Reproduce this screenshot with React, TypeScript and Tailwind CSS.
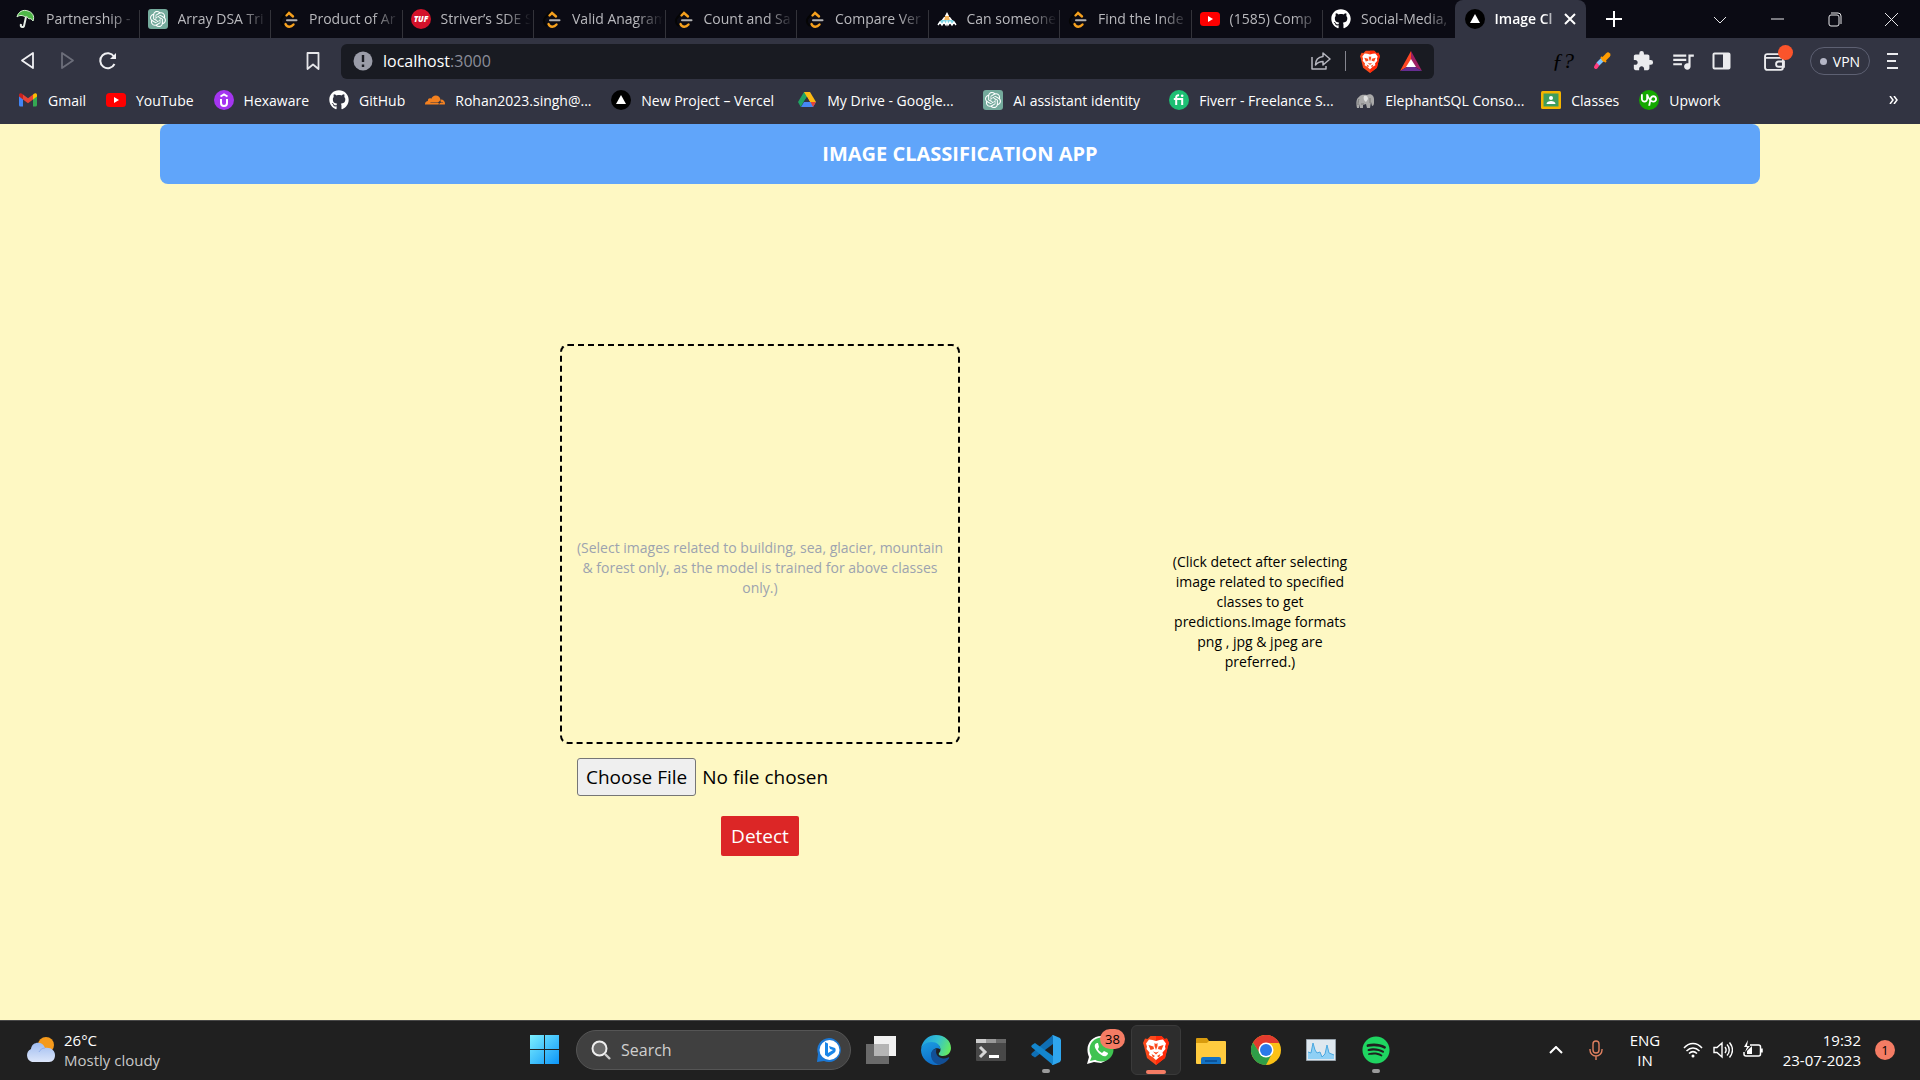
import React from "react";
import { FaGithub, FaSpotify } from "react-icons/fa";
import { SiOpenai, SiCloudflare, SiUpwork } from "react-icons/si";
import { MdExtension, MdQueueMusic } from "react-icons/md";

type Svg = { className?: string };

const Umbrella = () => (
  <svg viewBox="0 0 20 20" className="size-5 shrink-0">
    <path d="M1 8C2 3 7 0 12 2c4 1 7 5 5 10-1-2-3-3-4-2-1-2-3-3-4-2C7 6 3 6 1 8z" fill="#4fb748" stroke="#d9f2d4" />
    <path d="M10 8 8 17c-1 2-4 1-3-2" fill="none" stroke="#e6ede6" strokeWidth="2" />
  </svg>
);
const OpenAi = () => (
  <span className="flex size-5 shrink-0 items-center justify-center rounded-[3px] bg-[#74aa9c] text-white">
    <SiOpenai className="size-4" />
  </span>
);
const LeetCode = () => (
  <svg viewBox="0 0 20 20" className="size-5 shrink-0">
    <path d="M9 2 3 9c-1.500 2-1.500 4 0 6l2 2" fill="none" stroke="#050505" strokeWidth="2" />
    <path d="M7.500 6.500 10 4l4 3.500" fill="none" stroke="#f5a01d" strokeWidth="2.4" strokeLinecap="round" />
    <path d="M6.500 15c1.500 3.500 5.500 3.500 8 .5" fill="none" stroke="#f5a01d" strokeWidth="2.400" strokeLinecap="round" />
    <path d="M8 11.200h9.500" stroke="#b3b3b3" strokeWidth="2" strokeLinecap="round" />
  </svg>
);
const Tuf = () => (
  <svg viewBox="0 0 20 20" className="size-5 shrink-0">
    <circle cx="10" cy="10" r="10" fill="#d3122a" />
    <text x="10" y="13" textAnchor="middle" fontSize="8" fontWeight="800" fontStyle="italic" fontFamily="Open Sans, sans-serif" fill="#fff">TUF</text>
  </svg>
);
const Pyramid = () => (
  <svg viewBox="0 0 20 20" className="size-5 shrink-0">
    <path d="M10 4 15 12H5z" fill="#f6b65c" />
    <path d="M10 3 8 7h4zM7 8l-3 4h3l1-4zM13 8l3 4h-3l-1-4z" fill="#fff" />
    <path d="M1 15h18l-3-4H4z" fill="#7fd6e6" />
    <path d="M1 16l2-3 2 3 2-3 2 3 1-3 1 3 2-3 2 3 2-3 2 3" fill="none" stroke="#fff" strokeWidth="1.4" />
  </svg>
);
const YouTube = () => (
  <svg viewBox="0 0 20 20" className="size-5 shrink-0">
    <rect y="3" width="20" height="14" rx="3.5" fill="#f00" />
    <path d="m8 7 5 3-5 3z" fill="#fff" />
  </svg>
);
const GitHub = () => <FaGithub className="size-5 shrink-0 text-white" />;
const Vercel = () => (
  <svg viewBox="0 0 20 20" className="size-5 shrink-0">
    <circle cx="10" cy="10" r="10" fill="#000" />
    <path d="m10 5 5 9H5z" fill="#fff" />
  </svg>
);
const Gmail = () => (
  <svg viewBox="0 0 20 20" className="size-5 shrink-0">
    <path d="M1 5v10a1.500 1.500 0 0 0 1.500 1.500H5V8z" fill="#4285f4" />
    <path d="M19 5v10a1.500 1.500 0 0 1-1.500 1.500H15V8z" fill="#34a853" />
    <path d="M15 4.500V9.500l4-3V5c0-2-2-2.500-3.500-1z" fill="#fbbc04" />
    <path d="M5 4.500V9.500l-4-3V5c0-2 2-2.500 3.500-1z" fill="#c5221f" />
    <path d="M5 4.500l5 3.800 5-3.800v5l-5 3.800-5-3.800z" fill="#ea4335" />
  </svg>
);
const Hexaware = () => (
  <svg viewBox="0 0 20 20" className="size-5 shrink-0">
    <circle cx="10" cy="10" r="10" fill="#a435f0" />
    <path d="M7 9v4a3 3 0 0 0 6 0V9M6.500 6.500 10 4.500l3.500 2" fill="none" stroke="#fff" strokeWidth="2" />
  </svg>
);
const Cloudflare = () => <SiCloudflare className="size-5 shrink-0 text-[#f48120]" />;
const Drive = () => (
  <svg viewBox="0 0 20 20" className="size-5 shrink-0">
    <path d="M7 2h6l-6.500 10L3.800 17 1 12z" fill="#1fa463" />
    <path d="M7 2h6l6 10h-6z" fill="#fdb912" />
    <path d="M4 17l3-5h12l-3 5z" fill="#4688f4" />
    <path d="M10 7.200 12.800 12H7.200z" fill="#323442" />
    <path d="M16 17l-2.500-5H19z" fill="#e5443a" />
  </svg>
);
const Fiverr = () => (
  <svg viewBox="0 0 20 20" className="size-5 shrink-0">
    <circle cx="10" cy="10" r="10" fill="#1dbf73" />
    <path d="M7.200 15V7.500C7.200 6 8 5.200 10 5.300M4.800 9h8.400V15" fill="none" stroke="#fff" strokeWidth="2" />
    <circle cx="13.200" cy="5.800" r="1.300" fill="#fff" />
  </svg>
);
const Elephant = () => (
  <svg viewBox="0 0 20 20" className="size-5 shrink-0">
    <path d="M2 18c-1-5-1-9 2-11 2-3 6-2 8-2 3-2 7 0 7 4v4c0 2-1 3-2 3l-1-4-1 6h-3l-1-4-3 1v3H5v-4l-1 4z" fill="#a9a9a9" />
    <path d="M9 6c2-1 4 0 4 3l-2 3c-2-1-3-4-2-6z" fill="#e0e0e0" />
    <path d="M4 9c-1 2-1 4-1 6M15 8v5M6 14h3" stroke="#777" fill="none" />
  </svg>
);
const Classes = () => (
  <svg viewBox="0 0 20 20" className="size-5 shrink-0">
    <rect y="1" width="20" height="18" rx="1.500" fill="#f4b400" />
    <rect x="2.500" y="3.500" width="15" height="13" fill="#3f9d5e" />
    <circle cx="10" cy="8" r="2" fill="#fff" />
    <path d="M5.500 14c0-4 9-4 9 0z" fill="#fff" />
  </svg>
);
const Upwork = () => (
  <span className="flex size-5 shrink-0 items-center justify-center rounded-full bg-[#14a800] text-white">
    <SiUpwork className="size-4" />
  </span>
);

const BraveLogo = ({ className }: Svg) => (
  <svg viewBox="0 0 26 30" className={className}>
    <path d="M7.500 1h11l3 3 2.500-.5L26 8l-1 3-3 12-9 7-9-7L1 11 0 8l2-4.500 2.500.5z" fill="#fb4a1c" />
    <path d="M13 1h5.500l3 3 2.500-.5L26 8l-1 3-3 12-9 7z" fill="#ff2a0a" />
    <path d="m9.500 5 3.500 1 3.500-1 3.500-.5 3 4-1 3 .5 2.500-3 3.500.5 2.500-3.500 2-3.500 3-3.500-3-3.500-2 .5-2.500-3-3.500.5-2.500-1-3 3-4z" fill="#fff" />
    <path d="m5.500 10 5 1.500.5 2.500-3.500 1zM20.500 10l-5 1.500-.5 2.500 3.500 1zM11.500 8l1.500 1 1.500-1v3L13 15l-1.500-4zM10 16.500l3 1 3-1-3 3zM8.500 19l3.500 2-2 1.500zM17.500 19 14 21l2 1.500z" fill="#fb4a1c" />
  </svg>
);

const tabs = [
  { icon: Umbrella, title: "Partnership -" },
  { icon: OpenAi, title: "Array DSA Tri" },
  { icon: LeetCode, title: "Product of Ar" },
  { icon: Tuf, title: "Striver’s SDE S" },
  { icon: LeetCode, title: "Valid Anagram" },
  { icon: LeetCode, title: "Count and Sa" },
  { icon: LeetCode, title: "Compare Ver" },
  { icon: Pyramid, title: "Can someone" },
  { icon: LeetCode, title: "Find the Inde" },
  { icon: YouTube, title: "(1585) Comp" },
  { icon: GitHub, title: "Social-Media," },
];

const bookmarks = [
  { icon: Gmail, label: "Gmail" },
  { icon: YouTube, label: "YouTube" },
  { icon: Hexaware, label: "Hexaware" },
  { icon: GitHub, label: "GitHub" },
  { icon: Cloudflare, label: "Rohan2023.singh@...", long: true },
  { icon: Vercel, label: "New Project – Vercel", long: true },
  { icon: Drive, label: "My Drive - Google...", long: true },
  { icon: OpenAi, label: "AI assistant identity", long: true },
  { icon: Fiverr, label: "Fiverr - Freelance S...", long: true },
  { icon: Elephant, label: "ElephantSQL Conso...", long: true },
  { icon: Classes, label: "Classes" },
  { icon: Upwork, label: "Upwork" },
];

const fade = "min-w-0 flex-1 overflow-hidden whitespace-nowrap [mask-image:linear-gradient(to_right,black_70%,transparent)]";

function TabStrip() {
  return (
    <div className="flex h-[38px] bg-[#0b0b14]">
      <div className="grid min-w-0 flex-1 grid-cols-12 pl-2">
        {tabs.map((t, i) => (
          <button key={t.title} className="flex min-w-0 items-center pl-2 text-left text-[14px] text-[#b9b9bd]">
            <t.icon />
            <span className={fade + " mb-0.5 ml-2.5"}>{t.title}</span>
            <span className={i === 10 ? "h-7 w-px self-end" : "ml-0.5 h-7 w-px self-end bg-[#33333a]"} />
          </button>
        ))}
        <div className="flex min-w-0 items-center rounded-t-lg bg-[#323442] pr-2.5 pl-2.5 text-[14px] text-white">
          <Vercel />
          <span className={fade + " mb-0.5 ml-2.5 font-semibold"}>Image Cl</span>
          <button aria-label="Close tab">
            <svg viewBox="0 0 12 12" className="size-3"><path d="m1 1 10 10M11 1 1 11" stroke="#fff" strokeWidth="2" /></svg>
          </button>
        </div>
      </div>
      <button aria-label="New tab" className="flex w-14 items-center justify-center">
        <svg viewBox="0 0 16 16" className="size-4"><path d="M8 0v16M0 8h16" stroke="#fff" strokeWidth="2" /></svg>
      </button>
      <div className="ml-[50px] flex">
        {[
          ["Search tabs", "m1 5 6 6 6-6"],
          ["Minimize", "M1 7h13"],
          ["Restore", "M2 5a2 2 0 0 1 2-2h6a2 2 0 0 1 2 2v7a2 2 0 0 1-2 2H4a2 2 0 0 1-2-2zM4 1h7a3 3 0 0 1 3 3v8"],
          ["Close", "m1 1 13 13M14 1 1 14"],
        ].map(([label, d]) => (
          <button key={label} aria-label={label} className="flex w-[57px] items-center justify-center">
            <svg viewBox="0 0 15 15" className="size-[15px]" fill="none" stroke="#e8e8ea"><path d={d} /></svg>
          </button>
        ))}
      </div>
    </div>
  );
}

function Toolbar() {
  return (
    <div className="flex h-[46px] items-center bg-[#323442]">
      <div className="flex w-[341px] items-center pl-[18px]">
        <button aria-label="Back">
          <svg viewBox="0 0 20 20" className="size-5" fill="none" stroke="#f0f0f3" strokeWidth="1.800" strokeLinejoin="round"><path d="M15 2v15L4 9.500z" /></svg>
        </button>
        <button aria-label="Forward" className="ml-5">
          <svg viewBox="0 0 20 20" className="size-5" fill="none" stroke="#6c6e7a" strokeWidth="1.800" strokeLinejoin="round"><path d="M4 2v15l11-7.500z" /></svg>
        </button>
        <button aria-label="Reload" className="ml-5">
          <svg viewBox="0 0 20 20" className="size-5" fill="none" stroke="#f0f0f3" strokeWidth="2"><path d="M16.500 13A7.500 7.500 0 1 1 16 5.500" /><path d="M18 2v6h-6z" fill="#f0f0f3" stroke="none" /></svg>
        </button>
        <button aria-label="Bookmark this page" className="mr-[18px] ml-auto">
          <svg viewBox="0 0 20 20" className="size-5" fill="none" stroke="#e6e6ea" strokeWidth="1.800" strokeLinejoin="round"><path d="M4.500 2h11v16L10 13.500 4.500 18z" /></svg>
        </button>
      </div>
      <div className="flex h-[35px] min-w-0 flex-1 items-center rounded-md bg-[#191b22] pl-3">
        <svg viewBox="0 0 20 20" className="size-5"><circle cx="10" cy="10" r="9.500" fill="#9a9ca8" /><path d="M10 4v7M10 13.500v2.500" stroke="#191b22" strokeWidth="2.400" /></svg>
        <div className="ml-2.5 flex-1 text-[16px] text-[#8c8e99]"><span className="text-white">localhost</span>:3000</div>
        <button aria-label="Share">
          <svg viewBox="0 0 20 20" className="size-5" fill="none" stroke="#b5b6bf" strokeWidth="1.500" strokeLinejoin="round"><path d="M1 6v12h14v-3" /><path d="M12 2l7 6-7 6v-3.500c-3 0-5 .5-7.500 3.500 0-5 3-8 7.500-8.500z" /></svg>
        </button>
        <span className="mx-3.5 h-5 w-px bg-[#85868f]" />
        <button aria-label="Brave Shields"><BraveLogo className="h-[23px] w-5" /></button>
        <button aria-label="Rewards" className="mr-3 ml-5">
          <svg viewBox="0 0 22 20" className="h-5 w-[22px]"><path d="M11 0 0 20l7-4 4-7z" fill="#ff4724" /><path d="M11 0v9l4 7 7 4z" fill="#9e1f63" /><path d="M0 20h22l-7-4H7z" fill="#662d91" /><path d="m11 8 5 8H6z" fill="#fff" /></svg>
        </button>
      </div>
      <div className="flex w-[486px] items-center pr-[22px] pl-[118px]">
        <button className="w-5 font-['Liberation_Serif',serif] text-[22px] leading-6 whitespace-nowrap text-black italic">ƒ?</button>
        <button aria-label="Color picker" className="ml-5">
          <svg viewBox="0 0 20 20" className="size-5"><path d="m4 16 2-3" stroke="#ff3d7f" strokeWidth="4" strokeLinecap="round" /><path d="m6 13 5-5" stroke="#7fc4ff" strokeWidth="4" /><path d="m9 6 5 5" stroke="#ff9c00" strokeWidth="2" /><path d="m12 8 4-4" stroke="#ff9c00" strokeWidth="5" strokeLinecap="round" /></svg>
        </button>
        <button aria-label="Extensions" className="ml-5"><MdExtension className="size-[22px] text-[#ebebee]" /></button>
        <button aria-label="Media" className="ml-4"><MdQueueMusic className="size-[26px] text-[#ebebee]" /></button>
        <button aria-label="Sidebar" className="ml-4">
          <svg viewBox="0 0 20 20" className="size-5"><rect x="1.500" y="2.500" width="16" height="15" rx="1" fill="none" stroke="#ebebee" strokeWidth="2" /><path d="M11 2h7v16h-7z" fill="#ebebee" /></svg>
        </button>
        <button aria-label="Wallet" className="relative ml-8">
          <svg viewBox="0 0 20 20" className="size-[21px]" fill="none" stroke="#ebebee" strokeWidth="1.800"><rect x="1" y="3" width="17" height="15" rx="2" /><path d="M1 6.500h16M19 10h-5a2.500 2.500 0 0 0 0 5h5z" /></svg>
          <span className="absolute -top-1.5 left-[14px] size-[15px] rounded-full bg-[#fb542b]" />
        </button>
        <button className="ml-auto flex h-7 w-[60px] items-center justify-center gap-1.5 rounded-full border border-[#5d6072] text-[14px] text-white">
          <span className="size-[7px] rounded-full bg-[#b4b6c6]" />VPN
        </button>
        <button aria-label="Menu" className="ml-4">
          <svg viewBox="0 0 12 18" className="h-[18px] w-3"><path d="M1 2h11M1 9h9M1 16h11" stroke="#ebebee" strokeWidth="2" /></svg>
        </button>
      </div>
    </div>
  );
}

function Bookmarks() {
  return (
    <nav className="flex h-10 items-center gap-5 bg-[#323442] pr-[22px] pb-2 pl-[18px] text-[14px] text-white">
      {bookmarks.map((b) => (
        <a key={b.label} href="#" className={b.long ? "flex w-[166px] items-center gap-2.5 whitespace-nowrap" : "flex items-center gap-2.5 whitespace-nowrap"}>
          <b.icon />{b.label}
        </a>
      ))}
      <button aria-label="More bookmarks" className="ml-auto">
        <svg viewBox="0 0 9 8" className="h-2 w-[9px]" fill="none" stroke="#fff" strokeWidth="1.500"><path d="m1 0 3 4-3 4M5 0l3 4-3 4" /></svg>
      </button>
    </nav>
  );
}

const TaskView = () => (
  <svg viewBox="0 0 30 30" className="size-[30px]"><path d="M8 1h22v20H8z" fill="#f1f1f1" /><path d="M0 9h23v20H0z" fill="#6a6a6a" /><path d="M8 9h15v12H8z" fill="#b5b5b5" /></svg>
);
const Edge = () => (
  <svg viewBox="0 0 30 30" className="size-[30px]">
    <defs>
      <linearGradient id="edgeTop" x1="0" y1="0.3" x2="1" y2="0.6"><stop offset="0" stopColor="#1fa0e0" /><stop offset="0.5" stopColor="#35c1d0" /><stop offset="1" stopColor="#66eb5e" /></linearGradient>
      <linearGradient id="edgeLeft" x1="0" y1="0" x2="0.3" y2="1"><stop offset="0" stopColor="#1b9de2" /><stop offset="1" stopColor="#0f6fc9" /></linearGradient>
    </defs>
    <path d="M0 14C1 6 7 0 15 0c9 0 15 6 15 13 0 5-4 8-8 8-3 0-5-1-4-3 1-1 1.500-2 1.500-3.500C19.500 11 16 8 10.500 8 6 8 1.500 10 0 14z" fill="url(#edgeTop)" />
    <path d="M0 15c.5-5 5-8 10.500-8 5.500 0 9 3.500 9 7.500-4-3-9 0-9 5 0 5 4 9.500 9.500 9.800-2 .7-4 .7-5 .7C7 30 0 23 0 15z" fill="url(#edgeLeft)" />
    <path d="M10 18.500C9.500 25 14 30 19.500 29.400c4-1 7-3.500 8.500-6 .5-1 0-1.400-1-1-2 1-4 1.300-6 .8-4.500-1-7-4.700-5.500-9.200-3 0-5 1.800-5.500 4.500z" fill="#124f96" />
  </svg>
);
const Terminal = () => (
  <svg viewBox="0 0 30 30" className="size-[30px]"><rect y="4" width="30" height="22" rx="1" fill="#484848" /><path d="M0 4h10v4H0z" fill="#ccc" /><path d="M10 4h10v4H10z" fill="#999" /><path d="M20 4h10v4H20z" fill="#6a6a6a" /><path d="m4 12 5 5-5 5" fill="none" stroke="#d5d5d5" strokeWidth="3" /><path d="M13 21.500h10" stroke="#fff" strokeWidth="3" /></svg>
);
const VsCode = () => (
  <svg viewBox="0 0 30 30" className="size-[30px]">
    <path d="M22 0v9L4 22.500 1 20.500c-1-1-1-1.500 0-2.500z" fill="#0f6fb5" />
    <path d="M22 30v-9L4 8 1 10c-1 1-1 1.500 0 2.500z" fill="#1486cd" />
    <path d="M22 0l7 3 1 2v20l-1 2-7 3c0 0-1 0-1.500-1 1 .5 1.500 0 1.500-1V2c0-1-.5-1.500-1.500-1z" fill="#2fa6ee" />
  </svg>
);
const WhatsApp = () => (
  <span className="relative">
    <svg viewBox="0 0 30 30" className="size-[30px]"><path d="M15 1a14 14 0 0 1 0 27L8 27l-7 2 2-7C-2 10 6 1 15 1z" fill="#fff" /><circle cx="15.500" cy="14.500" r="12" fill="#3fc351" /><path d="M4 26l3-8 6 6z" fill="#3fc351" /><path d="M11 8c-3 1-3 4 0 8s7 6 9 5c2-1 2-3 2-3l-4-2-2 2c-2-1-4-3-4-4l1-2-1-4z" fill="#fff" /></svg>
    <span className="absolute -top-1.5 left-3.5 flex h-5 w-[25px] items-center justify-center rounded-full bg-[#f47c64] text-[13px] text-black">38</span>
  </span>
);
const Folder = () => (
  <svg viewBox="0 0 30 30" className="size-[30px]"><path d="M0 4q0-1 1-1h10l2 3h16v8H0z" fill="#d89b0e" /><path d="M0 8h11l2-2h16q1 0 1 1v20q0 2-1 2H1q-1 0-1-1z" fill="#ffcb3f" /><path d="M5 29v-5q0-2 2-2h16q2 0 2 2v5z" fill="#1372c4" /><path d="M9 26h12" stroke="#0a4a8c" strokeWidth="1.500" /></svg>
);
const Chrome = () => (
  <svg viewBox="0 0 30 30" className="size-[30px]"><circle cx="15" cy="15" r="15" fill="#fbc116" /><path d="M15 15v-7h13.300A15 15 0 0 0 2 7.500L9 19z" fill="#e33b2e" /><path d="M2 7.500A15 15 0 0 0 15 30l6-11.500H9z" fill="#2f9e48" /><circle cx="15" cy="15" r="7.500" fill="#fff" /><circle cx="15" cy="15" r="6" fill="#2a79ea" /></svg>
);
const Monitor = () => (
  <svg viewBox="0 0 30 30" className="size-[30px]"><path d="M.5 4.500h29v21H.5z" fill="#dfe8ef" stroke="#98a3ac" /><path d="M2 24v-7l3 1 2-10 2 7 2 3 3-1 2 5 3-3 2-9 2 8 5 2v4z" fill="#8fd0f5" /><path d="M2 17l3 1 2-10 2 7 2 3 3-1 2 5 3-3 2-9 2 8 5 2" fill="none" stroke="#4aa8e0" /></svg>
);
const Spotify = () => (
  <span className="flex size-[30px] items-center justify-center"><FaSpotify className="size-7 text-[#1fd561]" /></span>
);

const apps = [
  { name: "Task View", icon: TaskView },
  { name: "Edge", icon: Edge },
  { name: "Terminal", icon: Terminal },
  { name: "VS Code", icon: VsCode, open: true },
  { name: "WhatsApp", icon: WhatsApp },
  { name: "Brave", icon: () => <BraveLogo className="h-[30px] w-[26px]" />, active: true },
  { name: "Files", icon: Folder },
  { name: "Chrome", icon: Chrome },
  { name: "Monitor", icon: Monitor },
  { name: "Spotify", icon: Spotify, open: true },
];

function Taskbar() {
  return (
    <footer className="grid h-[60px] grid-cols-[1fr_auto_1fr] items-center border-t border-[#484848] bg-[#202020] pb-0.5 text-[15px] leading-5 text-white">
      <button className="flex items-center gap-2 pl-6 text-left">
        <svg viewBox="0 0 32 30" className="h-[30px] w-8">
          <defs><linearGradient id="cloud" x1="0" y1="0" x2="0" y2="1"><stop offset="0" stopColor="#9fbcf0" /><stop offset="1" stopColor="#dce6fa" /></linearGradient></defs>
          <circle cx="22" cy="10" r="8" fill="#f59a1c" />
          <path d="M8 27a7 7 0 0 1-1-13C8 6 19 6 21 13c6-1 10 3 10 7s-2 7-6 7z" fill="url(#cloud)" />
          <path d="M21 13c-3 0-5 2-6 4" fill="none" stroke="#8fadea" />
        </svg>
        <span><span className="block">26°C</span><span className="block text-[#c8c8c8]">Mostly cloudy</span></span>
      </button>
      <div className="flex items-center">
        <button aria-label="Start" className="flex w-[50px] justify-center">
          <svg viewBox="0 0 29 29" className="size-[29px]"><defs><linearGradient id="win" x1="0" y1="0" x2="1" y2="1"><stop offset="0" stopColor="#7df0ff" /><stop offset="1" stopColor="#0c95f8" /></linearGradient></defs><path d="M0 0h14v14H0zM15 0h14v14H15zM0 15h14v14H0zM15 15h14v14H15z" fill="url(#win)" /></svg>
        </button>
        <label className="mr-[5px] ml-[7px] flex h-10 w-[275px] items-center rounded-full border border-[#555] bg-[#404040] pr-2 pl-3.5">
          <svg viewBox="0 0 20 20" className="size-5 shrink-0"><circle cx="8.500" cy="8.500" r="7" fill="#6a6a6a" stroke="#eee" strokeWidth="2" /><path d="m14 14 5 5" stroke="#ccc" strokeWidth="2.400" /></svg>
          <input aria-label="Search" placeholder="Search" className="ml-2.5 min-w-0 flex-1 bg-transparent text-[16px] outline-none placeholder:text-[#cfcfcf]" />
          <svg viewBox="0 0 26 26" className="size-[26px] shrink-0"><path d="M13 1a12 12 0 1 1-5 23l-7 1 1-8A12 12 0 0 1 13 1z" fill="#1c78d4" /><circle cx="13.500" cy="13" r="10" fill="#fff" /><path d="M9 5l3 1.500V16l5-3-3-1-1-3 6 2c1 1 1 4-1 5l-6 4-3-2z" fill="#1a86e8" /></svg>
        </label>
        <div className="flex gap-[5px]">
          {apps.map((a) => (
            <button key={a.name} aria-label={a.name} className={a.active ? "relative flex size-[50px] items-center justify-center rounded-md border border-[#3a3a3a] bg-[#2d2d2d]" : "relative flex size-[50px] items-center justify-center"}>
              <a.icon />
              {a.open && <span className="absolute bottom-0.5 h-1 w-2 rounded-full bg-[#9a9a9a]" />}
              {a.active && <span className="absolute bottom-0 h-1 w-5 rounded-full bg-[#f47c64]" />}
            </button>
          ))}
        </div>
      </div>
      <div className="flex items-center justify-end pr-[25px]">
        <svg viewBox="0 0 14 8" className="h-2 w-3.5" fill="none" stroke="#fff" strokeWidth="2"><path d="m1 7 6-6 6 6" /></svg>
        <svg viewBox="0 0 14 20" className="ml-[26px] h-5 w-3.5" fill="none" stroke="#e08060" strokeWidth="1.400"><rect x="4" y="1" width="6" height="12" rx="3" /><path d="M1 9v1a6 6 0 0 0 12 0V9M7 16v4" /></svg>
        <div className="ml-6 w-9 text-center">ENG<br />IN</div>
        <div className="ml-5 flex items-center gap-2.5">
          <svg viewBox="0 0 20 20" className="size-5" fill="none" stroke="#fff" strokeWidth="1.500"><path d="M1 8c5-6 13-6 18 0M3.500 11c4-4 9-4 13 0M6 13.500c2.500-2.500 5.500-2.500 8 0" /><circle cx="10" cy="16" r="1.500" fill="#fff" stroke="none" /></svg>
          <svg viewBox="0 0 20 20" className="size-5" fill="none" stroke="#fff" strokeWidth="1.400"><path d="M1 7.500v5h3l5 4.500V3L4 7.500zM12 7c1.500 2 1.500 4 0 6M14 4.500c3 3 3 8 0 11M16.500 2.500c4 5 4 10 0 15" /></svg>
          <svg viewBox="0 0 20 20" className="size-5" fill="none" stroke="#fff" strokeWidth="1.500"><path d="M7 5h8.500q2 0 2 2v7q0 2-2 2H3q-2 0-2-2v-2M19 8.500v4" /><path d="M4 14V11l5-5v8z" fill="#fff" stroke="none" /><path d="M5 0 1 7h3l-2 5 5-6H4z" fill="#fff" stroke="none" /></svg>
        </div>
        <div className="w-[98px] text-right">19:32<br />23-07-2023</div>
        <span className="ml-3.5 flex size-5 items-center justify-center rounded-full bg-[#f47c64] text-[13px] text-black">1</span>
      </div>
    </footer>
  );
}

export default function App() {
  return (
    <div className="flex min-h-screen flex-col bg-[#fef8c3] font-['Open_Sans','Noto_Sans',sans-serif]">
      <header>
        <TabStrip />
        <Toolbar />
        <Bookmarks />
      </header>
      <main className="flex flex-1 flex-col text-black">
        <h1 className="mx-auto w-10/12 rounded-lg bg-[#60a5fa] py-4 text-center text-[20px] leading-7 font-bold text-white">IMAGE CLASSIFICATION APP</h1>
        <div className="flex flex-1 items-center justify-center gap-[200px] pb-1">
          <section className="flex w-[400px] flex-col items-center">
            <div className="h-[400px] w-full rounded-lg border-2 border-dashed border-black px-2.5">
              <p className="mt-48 text-center text-[14px] leading-5 text-[#9ca3af]">(Select images related to building, sea, glacier, mountain &amp; forest only, as the model is trained for above classes only.)</p>
            </div>
            <input
              type="file"
              aria-label="Choose image"
              className="mt-3.5 w-[366px] text-[19px] leading-7 file:mr-1.5 file:rounded-[3px] file:border file:border-solid file:border-[#767676] file:bg-[#efefef] file:px-2 file:py-1 file:leading-7 file:text-black"
            />
            <button className="mt-5 h-10 rounded-xs bg-[#dc2626] px-2.5 text-[19px] text-white">Detect</button>
          </section>
          <p className="mt-6 w-[200px] px-2 text-center text-[14px] leading-5">(Click detect after selecting image related to specified classes to get predictions.Image formats png , jpg &amp; jpeg are preferred.)</p>
        </div>
      </main>
      <Taskbar />
    </div>
  );
}
